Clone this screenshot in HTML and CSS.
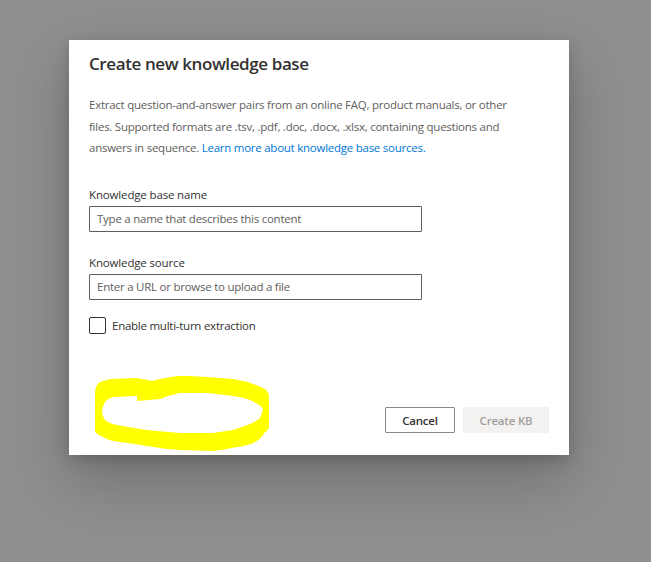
FILE: index.html
```html
<!DOCTYPE html>
<html lang="en">
<head>
<meta charset="utf-8">
<title>Create new knowledge base</title>
<link rel="stylesheet" href="styles.css">
</head>
<body>
<div class="overlay">
  <div class="dialog">
    <h1 class="title">Create new knowledge base</h1>
    <p class="desc">Extract question-and-answer pairs from an online FAQ, product manuals, or other files. Supported formats are .tsv, .pdf, .doc, .docx, .xlsx, containing questions and answers in sequence. <a class="link" href="#">Learn more about knowledge base sources.</a></p>
    <div class="field">
      <label class="label">Knowledge base name</label>
      <div class="input"><span class="placeholder">Type a name that describes this content</span></div>
    </div>
    <div class="field">
      <label class="label">Knowledge source</label>
      <div class="input"><span class="placeholder">Enter a URL or browse to upload a file</span></div>
    </div>
    <div class="check">
      <span class="box"></span>
      <span class="check-label">Enable multi-turn extraction</span>
    </div>
    <div class="footer">
      <button class="btn btn-default">Cancel</button>
      <button class="btn btn-disabled">Create KB</button>
    </div>
  </div>
</div>
<svg class="scribble" width="651" height="562" viewBox="0 0 651 562">
  <path fill="#ffff00" fill-rule="evenodd" d="
    M95 392 C96 384 99 382 103 381 L110 379 L137 378 L152 381 L160 379 L177 376 L190 376 C210 377 222 378 233 379 C243 381 249 382 253 384 C259 386 263 388 265 389 C268 392 269 394 269 397 L269 427 C268 430 267 431 265 432 C262 437 259 440 255 442 C250 445 244 446 237 447 C228 449 220 450 213 451 L180 450 C168 449 158 448 147 446 C137 444 128 443 120 442 C113 441 108 440 105 438 C100 436 97 434 95 432 Z
    M102 410 C103 406 104 404 105 402 C108 399 110 398 113 397 L137 396 L137 401 L160 399 L168 396 C172 395 176 394 180 393 L207 393 C217 394 225 395 233 396 C240 397 245 398 250 400 C256 403 260 405 263 409 C262 413 261 416 260 418 C257 421 254 422 250 424 C245 426 239 428 233 430 C226 431 220 432 213 433 L180 433 C168 432 157 431 147 430 C136 428 126 427 117 425 C111 424 108 422 105 420 C103 417 102 414 102 410 Z"/>
</svg>
</body>
</html>
```

FILE: styles.css
```css
html, body {
  margin: 0;
  padding: 0;
}
body {
  width: 651px;
  height: 562px;
  background: #8f8f8f;
  font-family: "Open Sans", "Noto Sans", sans-serif;
  position: relative;
  overflow: hidden;
}
.overlay {
  padding: 40px 0 0 69px;
}
.dialog {
  width: 500px;
  height: 415px;
  box-sizing: border-box;
  background: #ffffff;
  padding: 8px 20px 22px 20px;
  display: flex;
  flex-direction: column;
  box-shadow: 0 25px 58px rgba(0,0,0,0.22), 0 5px 14px rgba(0,0,0,0.18);
}
.title {
  margin: 0;
  font-size: 17px;
  letter-spacing: -0.4px;
  font-weight: 600;
  line-height: 32px;
  color: #323130;
}
.desc {
  width: 430px;
  margin: 14px 0 0 0;
  font-size: 11.5px;
  letter-spacing: -0.25px;
  line-height: 21.5px;
  color: #605e5c;
}
.link {
  color: #0078d4;
  text-decoration: none;
}
.field {
  display: flex;
  flex-direction: column;
  gap: 2px;
  margin-top: 27px;
}
.field + .field {
  margin-top: 22px;
}
.label {
  font-size: 11.5px;
  letter-spacing: -0.15px;
  font-weight: 500;
  line-height: 18px;
  color: #323130;
}
.input {
  width: 333px;
  height: 26px;
  box-sizing: border-box;
  border: 1px solid #605e5c;
  border-radius: 1px;
  display: flex;
  align-items: center;
  padding: 0 7px;
}
.placeholder {
  font-size: 11.5px;
  letter-spacing: -0.25px;
  color: #605e5c;
}
.check {
  display: flex;
  align-items: center;
  gap: 6px;
  margin-top: 17px;
}
.box {
  width: 17px;
  height: 17px;
  box-sizing: border-box;
  border: 1px solid #323130;
  border-radius: 2px;
}
.check-label {
  font-size: 11.5px;
  letter-spacing: -0.25px;
  color: #323130;
}
.footer {
  margin-top: auto;
  display: flex;
  justify-content: flex-end;
  gap: 8px;
}
.btn {
  height: 26px;
  box-sizing: border-box;
  font-family: inherit;
  font-size: 11.5px;
  letter-spacing: -0.2px;
  font-weight: 600;
  border-radius: 1px;
  padding: 0;
}
.btn-default {
  width: 70px;
  background: #ffffff;
  border: 1px solid #8a8886;
  color: #323130;
}
.btn-disabled {
  width: 86px;
  background: #f3f2f1;
  border: 1px solid #f3f2f1;
  color: #a19f9d;
}
.scribble {
  position: absolute;
  left: 0;
  top: 0;
  pointer-events: none;
}
```
